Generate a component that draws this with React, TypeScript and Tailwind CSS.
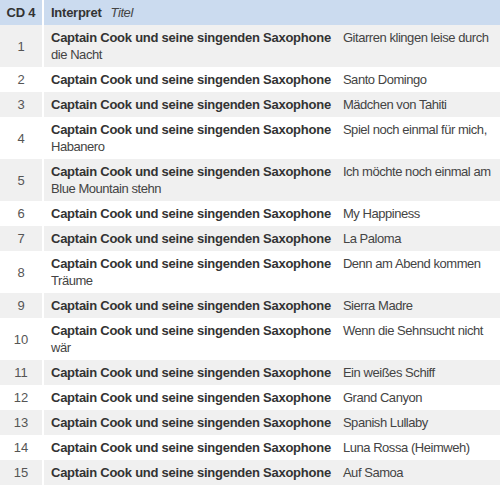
const tracks: { no: number; title: string }[] = [
  { no: 1, title: "Gitarren klingen leise durch die Nacht" },
  { no: 2, title: "Santo Domingo" },
  { no: 3, title: "Mädchen von Tahiti" },
  { no: 4, title: "Spiel noch einmal für mich, Habanero" },
  { no: 5, title: "Ich möchte noch einmal am Blue Mountain stehn" },
  { no: 6, title: "My Happiness" },
  { no: 7, title: "La Paloma" },
  { no: 8, title: "Denn am Abend kommen Träume" },
  { no: 9, title: "Sierra Madre" },
  { no: 10, title: "Wenn die Sehnsucht nicht wär" },
  { no: 11, title: "Ein weißes Schiff" },
  { no: 12, title: "Grand Canyon" },
  { no: 13, title: "Spanish Lullaby" },
  { no: 14, title: "Luna Rossa (Heimweh)" },
  { no: 15, title: "Auf Samoa" },
];

const artist = "Captain Cook und seine singenden Saxophone";

export default function App() {
  return (
    <div className="w-[500px] bg-white font-['Liberation_Sans',Arial,sans-serif] text-[13px] leading-[17px] text-[#333]">
      {/* Header */}
      <div className="flex h-[25px] bg-[#cbdbef]">
        <div className="w-[44px] shrink-0 flex items-center justify-center border-r-2 border-white font-bold tracking-[-0.2px]">
          CD 4
        </div>
        <div className="flex-1 flex items-center pl-[7px]">
          <span className="font-bold tracking-[-0.25px]">Interpret</span>
          <span className="ml-[9px] italic text-[#444] tracking-[-0.4px]">Titel</span>
        </div>
      </div>

      {/* Tracks */}
      {tracks.map((t, i) => (
        <div
          key={t.no}
          className={`flex ${i % 2 === 0 ? "bg-[#f0f0f0]" : "bg-white"}`}
        >
          <div className="w-[44px] shrink-0 flex items-center justify-center border-r-2 border-white text-[#555]">
            {t.no}
          </div>
          <div className="flex-1 pl-[7px] pr-[3px] pt-[4px] pb-[4px]">
            <span className="font-bold tracking-[-0.25px]">{artist}</span>
            <span className="ml-[12px] text-[#444] tracking-[-0.45px]">{t.title}</span>
          </div>
        </div>
      ))}
    </div>
  );
}
